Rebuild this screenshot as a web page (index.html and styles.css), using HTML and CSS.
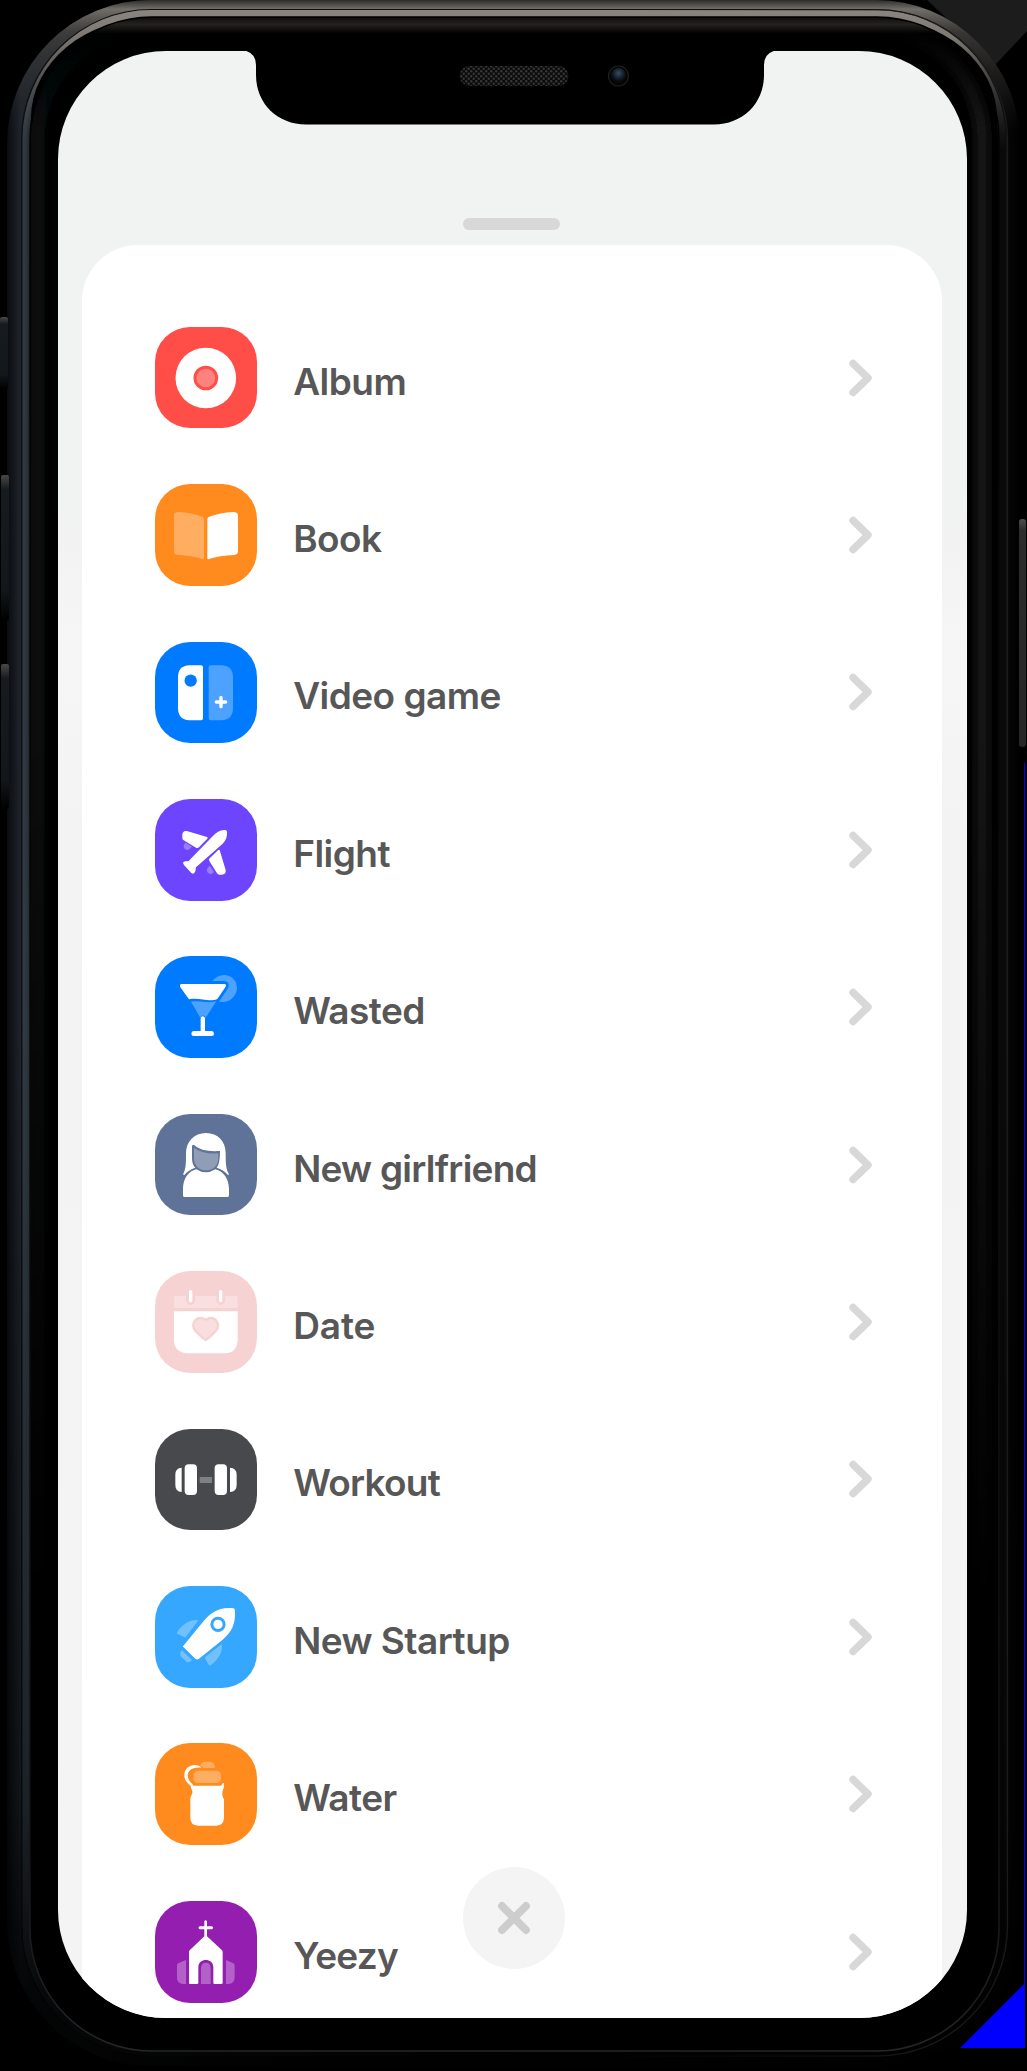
FILE: index.html
```html
<!DOCTYPE html>
<html lang="en">
<head>
<meta charset="utf-8">
<title>Add event</title>
<link rel="stylesheet" href="styles.css">
</head>
<body>
<div class="phone">
  <svg class="frame" viewBox="0 0 1027 2071" aria-hidden="true">
    <defs>
      <linearGradient id="sideOuter"><stop offset="0" stop-color="#090b0e"/><stop offset=".014" stop-color="#20262e"/><stop offset=".1" stop-color="#1c222a"/><stop offset=".3" stop-color="#080808"/><stop offset=".985" stop-color="#070707"/><stop offset="1" stop-color="#000"/></linearGradient>
      <linearGradient id="sideInner"><stop offset="0" stop-color="#333d46"/><stop offset=".12" stop-color="#2c343c"/><stop offset=".5" stop-color="#0c0c0c"/><stop offset="1" stop-color="#090909"/></linearGradient>
      <linearGradient id="topOuter" gradientUnits="userSpaceOnUse" x1="0" y1="0" x2="0" y2="130"><stop offset="0" stop-color="#2e2c2a"/><stop offset=".07" stop-color="#726e69"/><stop offset=".25" stop-color="#45423f" stop-opacity=".8"/><stop offset="1" stop-color="#222" stop-opacity="0"/></linearGradient>
      <linearGradient id="topInner" gradientUnits="userSpaceOnUse" x1="0" y1="10" x2="0" y2="150"><stop offset="0" stop-color="#8b857f"/><stop offset=".2" stop-color="#7c7771"/><stop offset="1" stop-color="#444" stop-opacity="0"/></linearGradient>
      <linearGradient id="glowSide"><stop offset="0" stop-color="#070b0f"/><stop offset=".2" stop-color="#000"/><stop offset=".8" stop-color="#0a0a0a"/><stop offset="1" stop-color="#191919"/></linearGradient>
      <linearGradient id="glowTop" gradientUnits="userSpaceOnUse" x1="0" y1="18" x2="0" y2="34"><stop offset="0" stop-color="#11100f"/><stop offset=".4" stop-color="#24221f"/><stop offset="1" stop-color="#000"/></linearGradient>
      <linearGradient id="glowFade" gradientUnits="userSpaceOnUse" x1="0" y1="30" x2="0" y2="2000"><stop offset="0" stop-color="#000"/><stop offset=".05" stop-color="#fff"/><stop offset=".35" stop-color="#fff"/><stop offset=".8" stop-color="#000"/></linearGradient>
      <mask id="glowMask" maskUnits="userSpaceOnUse" x="0" y="0" width="1027" height="2071"><rect width="1027" height="2071" fill="url(#glowFade)"/></mask>
      <linearGradient id="fade" x2="0" y2="1"><stop offset="0" stop-color="#000" stop-opacity="0"/><stop offset=".75" stop-color="#000" stop-opacity=".45"/><stop offset=".95" stop-color="#000" stop-opacity=".9"/></linearGradient>
      <linearGradient id="seam"><stop offset=".6" stop-color="#1b1b1c" stop-opacity="0"/><stop offset=".95" stop-color="#1b1b1c"/></linearGradient>
      <linearGradient id="rim" x2="0" y2="1"><stop offset="0" stop-color="#000"/><stop offset=".9" stop-color="#111215"/><stop offset="1" stop-color="#262626"/></linearGradient>
      <linearGradient id="button" x2="0" y2="1"><stop offset="0" stop-color="#4a4846"/><stop offset=".1" stop-color="#151b1f"/><stop offset=".8" stop-color="#12171b"/><stop offset="1" stop-color="#000"/></linearGradient>
      <linearGradient id="power" x2="0" y2="1"><stop offset="0" stop-color="#514f4d"/><stop offset=".05" stop-color="#2c2c2c"/><stop offset="1" stop-color="#262626"/></linearGradient>
      <filter id="soft" x="-5%" y="-5%" width="110%" height="110%"><feGaussianBlur stdDeviation="4"/></filter>
    </defs>
    <path fill="#1c1c1c" d="M927 0H1027V31L996 64Z"/>
    <rect x="7" y="0" width="1013" height="2066" rx="144" fill="url(#sideOuter)"/>
    <rect x="7" y="0" width="1013" height="2066" rx="144" fill="url(#topOuter)"/>
    <rect x="21" y="9" width="986" height="2048" rx="130" fill="#0e1013"/>
    <rect x="22.500" y="10" width="983" height="2046" rx="129" fill="url(#sideInner)"/>
    <rect x="22.500" y="10" width="983" height="2046" rx="129" fill="url(#topInner)"/>
    <rect x="7" y="1000" width="1013" height="1071" fill="url(#fade)"/>
    <rect x="22" y="10" width="985.500" height="2046" rx="130" fill="none" stroke="url(#seam)" stroke-width="1.200"/>
    <rect x="30" y="17" width="968" height="2034" rx="122" fill="#000"/>
    <rect x="31" y="18" width="966" height="200" rx="121" fill="url(#glowTop)"/>
    <g mask="url(#glowMask)"><rect x="38" y="27" width="944" height="2012" rx="112" fill="none" stroke="url(#glowSide)" stroke-width="14" filter="url(#soft)"/></g>
    <rect x="30" y="17" width="969" height="2034" rx="122" fill="none" stroke="url(#rim)" stroke-width="1.500"/>
    <rect x="0" y="317" width="8" height="72" rx="2" fill="url(#button)"/>
    <rect x="1" y="475" width="8" height="145" rx="2" fill="url(#button)"/>
    <rect x="1" y="664" width="8" height="145" rx="2" fill="url(#button)"/>
    <rect x="1019" y="519" width="7" height="228" rx="3" fill="url(#power)"/>
    <path fill="#00f" d="M1024 763H1025V2048H960L1024 1984Z"/>
  </svg>

  <main class="screen">
    <svg class="notch" viewBox="242 50 536 75" aria-hidden="true">
      <defs>
        <pattern id="mesh" width="5" height="5" patternUnits="userSpaceOnUse"><circle cx="1.200" cy="1.200" r="1.200" fill="#363636"/><circle cx="3.700" cy="3.700" r="1.200" fill="#363636"/></pattern>
        <radialGradient id="lens" cx=".5" cy=".35" r=".55"><stop offset="0" stop-color="#3a4c5c"/><stop offset=".6" stop-color="#14212e"/><stop offset="1" stop-color="#05080c"/></radialGradient>
      </defs>
      <path d="M242 50Q256 52 256 65V75C256 104 278 124.500 306 124.500H714C742 124.500 764 104 764 75V65Q764 52 778 50Z"/>
      <rect x="459.500" y="66" width="109" height="20" rx="10" fill="#0b0b0b"/>
      <rect x="459.500" y="66" width="109" height="20" rx="10" fill="url(#mesh)"/>
      <circle cx="618.500" cy="76" r="10" fill="#050505" stroke="#211f1e" stroke-width="1.200"/>
      <circle cx="618.500" cy="75.500" r="7.500" fill="url(#lens)"/>
    </svg>
    <div class="handle"></div>
    <section class="sheet">
      <ul class="list">
        <li class="row">
          <svg class="icon album" viewBox="45 50 305 305"><circle cx="197.500" cy="203" r="91" fill="#fff"/><circle cx="197.500" cy="203" r="37" fill="#ff4d48"/><circle cx="197.500" cy="203" r="28" fill="#fff" opacity=".3"/></svg>
          <span class="label">Album</span>
          <svg class="chevron" viewBox="0 0 24 38"><path d="M5 4.500L20 19L5 33.500"/></svg>
        </li>
        <li class="row">
          <svg class="icon book" viewBox="45 522 305 305"><path fill="#fff" opacity=".3" d="M102 617Q102 606 116 606Q155 607 188 621Q192 623 192 628V744Q192 749 187 747Q157 737 113 735Q102 734 102 724Z"/><path fill="#fff" d="M294 617Q294 606 280 606Q240 607 206 621Q202 623 202 628V744Q202 749 207 747Q238 737 283 735Q294 734 294 724Z"/></svg>
          <span class="label">Book</span>
          <svg class="chevron" viewBox="0 0 24 38"><path d="M5 4.500L20 19L5 33.500"/></svg>
        </li>
        <li class="row">
          <svg class="icon game" viewBox="45 50 305 305"><path fill="#fff" d="M148 120H183Q189 120 189 126V279Q189 285 183 285H148Q114 283 114 248V156Q114 122 148 120Z"/><circle cx="152" cy="166" r="18.500" fill="#007aff"/><path fill="#fff" opacity=".3" d="M245 120H212Q206 120 206 126V279Q206 285 212 285H245Q279 283 279 248V156Q279 122 245 120Z"/><path d="M229 230H257M243 216V244" stroke="#fff" stroke-width="10" stroke-linecap="round"/></svg>
          <span class="label">Video game</span>
          <svg class="chevron" viewBox="0 0 24 38"><path d="M5 4.500L20 19L5 33.500"/></svg>
        </li>
        <li class="row">
          <svg class="icon flight" viewBox="45 522 305 305"><g fill="#fff"><path opacity=".3" d="M137 653L156 665L149 672Q141 678 134 671Q128 663 134 656ZM209 722L222 741L219 744Q211 750 204 744Q198 736 203 729Z"/><path d="M261 620C262 636 257 647 248 656L168 727L166 739Q162 750 154 744L132 720Q125 711 136 709L146 708L218 634C229 621 241 614 255 615Q261 615 261 620Z"/><path d="M127 634C126 620 134 616 143 619L201 636Q205 638 202 641L177 667Q173 671 168 668L130 645Q127 643 127 638Z"/><path d="M239 675L257 735Q259 749 245 749H238Q234 749 231 745L208 708Q205 703 209 700L235 675Q238 673 239 675Z"/></g></svg>
          <span class="label">Flight</span>
          <svg class="chevron" viewBox="0 0 24 38"><path d="M5 4.500L20 19L5 33.500"/></svg>
        </li>
        <li class="row">
          <svg class="icon wasted" viewBox="45 50 305 305"><g fill="#fff"><path opacity=".3" d="M217 125C236 100 271 101 286 126C303 159 273 196 237 187L263 148Q270 136 262 128Q257 125 249 125Z"/><path d="M124 134H253Q260 135 257 142L232 179C205 190 182 174 147 180L120 142Q118 135 124 134Z"/><path opacity=".3" d="M153 187C184 183 199 193 229 186L196 237V231Q188 226 182 231V237Z"/><path d="M182 237Q182 231 188 231Q195 231 195 237V275H215Q222 276 222 283Q222 290 215 290H161Q154 290 154 283Q154 276 161 275H182Z"/></g></svg>
          <span class="label">Wasted</span>
          <svg class="chevron" viewBox="0 0 24 38"><path d="M5 4.500L20 19L5 33.500"/></svg>
        </li>
        <li class="row">
          <svg class="icon girlfriend" viewBox="45 522 305 305"><g fill="#fff"><path d="M138 640C138 604 163 579 198 579C234 579 257 604 257 640C257 670 258 688 266 701Q267 707 263 704Q251 689 230 683Q240 673 240 633C202 635 178 630 164 616Q158 612 156 618V654Q156 674 166 683Q145 690 134 704Q129 707 130 701C138 686 138 670 138 640Z"/><path opacity=".3" d="M162 623Q187 643 235 640V654C235 679 217 691 198 691C179 691 162 679 162 654Z"/><path d="M132 771Q129 771 129 766V747C129 716 146 693 169 688Q197 706 226 688C249 693 267 716 267 747V766Q267 771 263 771Z"/></g></svg>
          <span class="label tighter">New girlfriend</span>
          <svg class="chevron" viewBox="0 0 24 38"><path d="M5 4.500L20 19L5 33.500"/></svg>
        </li>
        <li class="row">
          <svg class="icon date" viewBox="45 50 305 305"><g fill="#fff"><path opacity=".3" d="M107 125H138V137Q140 152 152 152Q164 152 166 137V125H229V137Q231 152 242 152Q254 152 256 137V125H288Q293 125 293 131V161H102V131Q102 125 107 125Z"/><path d="M102 171H293V258Q291 297 253 297H142Q104 295 102 258Z"/><rect x="147" y="107" width="10" height="37" rx="5"/><rect x="237" y="107" width="10" height="37" rx="5"/></g><path fill="#f8dede" stroke="#f7d2d3" stroke-width="7" d="M197 257Q193 257 166 229C150 209 169 185 190 193Q197 199 204 193C225 185 244 209 228 229Q201 257 197 257Z"/></svg>
          <span class="label loose">Date</span>
          <svg class="chevron" viewBox="0 0 24 38"><path d="M5 4.500L20 19L5 33.500"/></svg>
        </li>
        <li class="row">
          <svg class="icon workout" viewBox="45 522 305 305"><g fill="#fff"><rect x="179" y="666" width="37" height="18" opacity=".3"/><rect x="134" y="628" width="37" height="92" rx="12"/><rect x="224" y="628" width="37" height="92" rx="12"/><path d="M125 638V711Q106 710 106 690V659Q106 639 125 638ZM270 638Q290 639 290 659V690Q290 710 270 711Z"/></g></svg>
          <span class="label tighter">Workout</span>
          <svg class="chevron" viewBox="0 0 24 38"><path d="M5 4.500L20 19L5 33.500"/></svg>
        </li>
        <li class="row">
          <svg class="icon startup" viewBox="45 50 305 305"><g fill="#fff"><path d="M129 231L188 159C211 130 239 111 281 117Q285 119 285 126C287 164 275 189 248 211L176 269Q171 272 166 268L130 233Q128 232 129 231Z"/><path opacity=".3" d="M112 187C125 169 144 151 171 152Q175 153 173 156L138 202Q136 205 132 203L112 193Q109 191 112 187ZM246 227C248 252 233 271 213 287Q209 290 206 286L195 267Q193 264 197 262L242 226Q246 224 246 227ZM126 243L156 272Q151 280 141 279L122 261Q117 251 126 243Z"/></g><circle cx="234" cy="165" r="18.500" fill="#fff" stroke="#36a7ff" stroke-width="9"/></svg>
          <span class="label">New Startup</span>
          <svg class="chevron" viewBox="0 0 24 38"><path d="M5 4.500L20 19L5 33.500"/></svg>
        </li>
        <li class="row">
          <svg class="icon water" viewBox="45 522 305 305"><g fill="#fff"><path opacity=".3" d="M180 591C183 582 188 578 195 578H209Q225 579 225 597H191Q187 592 180 591Z"/><rect x="161" y="605" width="82" height="37" rx="13" opacity=".3"/><path d="M184 596Q177 587 162 588C141 590 132 606 133 622C134 634 142 643 152 650C153 661 160 664 156 675Q151 684 151 690V748Q152 770 174 770H229Q251 770 252 748V691C247 684 245 674 249 663Q252 657 252 641Q246 642 243 650H161Q155 642 149 637C137 620 145 602 161 598Q171 595 184 596Z"/></g></svg>
          <span class="label">Water</span>
          <svg class="chevron" viewBox="0 0 24 38"><path d="M5 4.500L20 19L5 33.500"/></svg>
        </li>
        <li class="row">
          <svg class="icon yeezy" viewBox="465 153 305 305"><g fill="#fff"><path d="M613 214Q617 207 621 214V229H636Q643 233 636 238H621V259L666 301Q668 303 668 306V399Q668 402 664 402H643Q640 402 640 398V352C640 323 595 323 595 352V398Q595 402 591 402H570Q567 402 567 399V306Q567 303 569 301L613 259V238H599Q592 233 599 229H613Z"/><path opacity=".3" d="M603 402V355Q603 338 618 338Q632 338 632 355V402ZM558 330V402H550Q531 402 531 382V345Q532 341 536 339ZM678 330L700 340Q704 342 704 346V382Q704 402 685 402H678Z"/></g></svg>
          <span class="label tighter">Yeezy</span>
          <svg class="chevron" viewBox="0 0 24 38"><path d="M5 4.500L20 19L5 33.500"/></svg>
        </li>
      </ul>
    </section>
    <button class="close" aria-label="Close"><svg viewBox="0 0 40 40"><path d="M8 8L32 32M32 8L8 32"/></svg></button>
  </main>
</div>
</body>
</html>
```
FILE: styles.css
```css
* { box-sizing: border-box; }

body {
  margin: 0;
  background: #000;
  font-family: Inter, "Liberation Sans", sans-serif;
}

.phone {
  position: relative;
  width: 1027px;
  height: 2071px;
  padding: 50.500px 60px 53.500px 58px;
  overflow: hidden;
}

.frame {
  position: absolute;
  inset: 0;
  width: 1027px;
  height: 2071px;
}

.screen {
  position: relative;
  display: flex;
  flex-direction: column;
  height: 1967px;
  border-radius: 108px;
  overflow: hidden;
  background: linear-gradient(#f1f3f3 0, #f1f3f3 430px, #f2f2f2 480px, #f6f6f6 600px, #f3f3f3 780px, #f4f4f4 1967px);
}

.notch {
  position: absolute;
  left: 184px;
  top: -0.500px;
  width: 536px;
  height: 75px;
}

.handle {
  flex: none;
  width: 97px;
  height: 12px;
  margin: 167.500px 0 14.700px 404.500px;
  border-radius: 6px;
  background: #d8d8d8;
}

.sheet {
  flex: 1;
  min-height: 0;
  margin: 0 25px 0 24px;
  padding: 82px 68px 0 73px;
  border-radius: 56px 56px 0 0;
  background: #fff;
}

.list {
  display: flex;
  flex-direction: column;
  gap: 55.770px;
  margin: 0;
  padding: 0;
  list-style: none;
}

.row {
  display: flex;
  align-items: center;
  height: 101.670px;
}

.icon {
  flex: none;
  width: 101.670px;
  height: 101.670px;
  border-radius: 35px;
}

.album { background: #ff4d48; }
.book, .water { background: #ff8a1e; }
.game, .wasted { background: #007aff; }
.flight { background: #6e45ff; }
.girlfriend { background: #5f7399; }
.date { background: #f7d2d3; }
.workout { background: #48494d; }
.startup { background: #36a7ff; }
.yeezy { background: #931eb0; }

.label {
  flex: 1;
  padding: 8px 0 0 36.500px;
  color: #575757;
  font-size: 37px;
  font-weight: 600;
  line-height: 44px;
  letter-spacing: -0.530px;
  white-space: nowrap;
}

.tighter { letter-spacing: -0.750px; }
.loose { letter-spacing: -0.100px; }

.chevron {
  flex: none;
  width: 24px;
  height: 38px;
  margin-right: 2.500px;
  fill: none;
  stroke: #d8d8d8;
  stroke-width: 7.400;
  stroke-linecap: round;
  stroke-linejoin: round;
}

.close {
  position: absolute;
  left: 404.500px;
  top: 1816.500px;
  display: grid;
  place-items: center;
  width: 102px;
  height: 102px;
  padding: 0;
  border: 0;
  border-radius: 50%;
  background: #f4f4f4;
}

.close svg {
  width: 40px;
  height: 40px;
  stroke: #cdcdcd;
  stroke-width: 7.800;
  stroke-linecap: round;
}
```
